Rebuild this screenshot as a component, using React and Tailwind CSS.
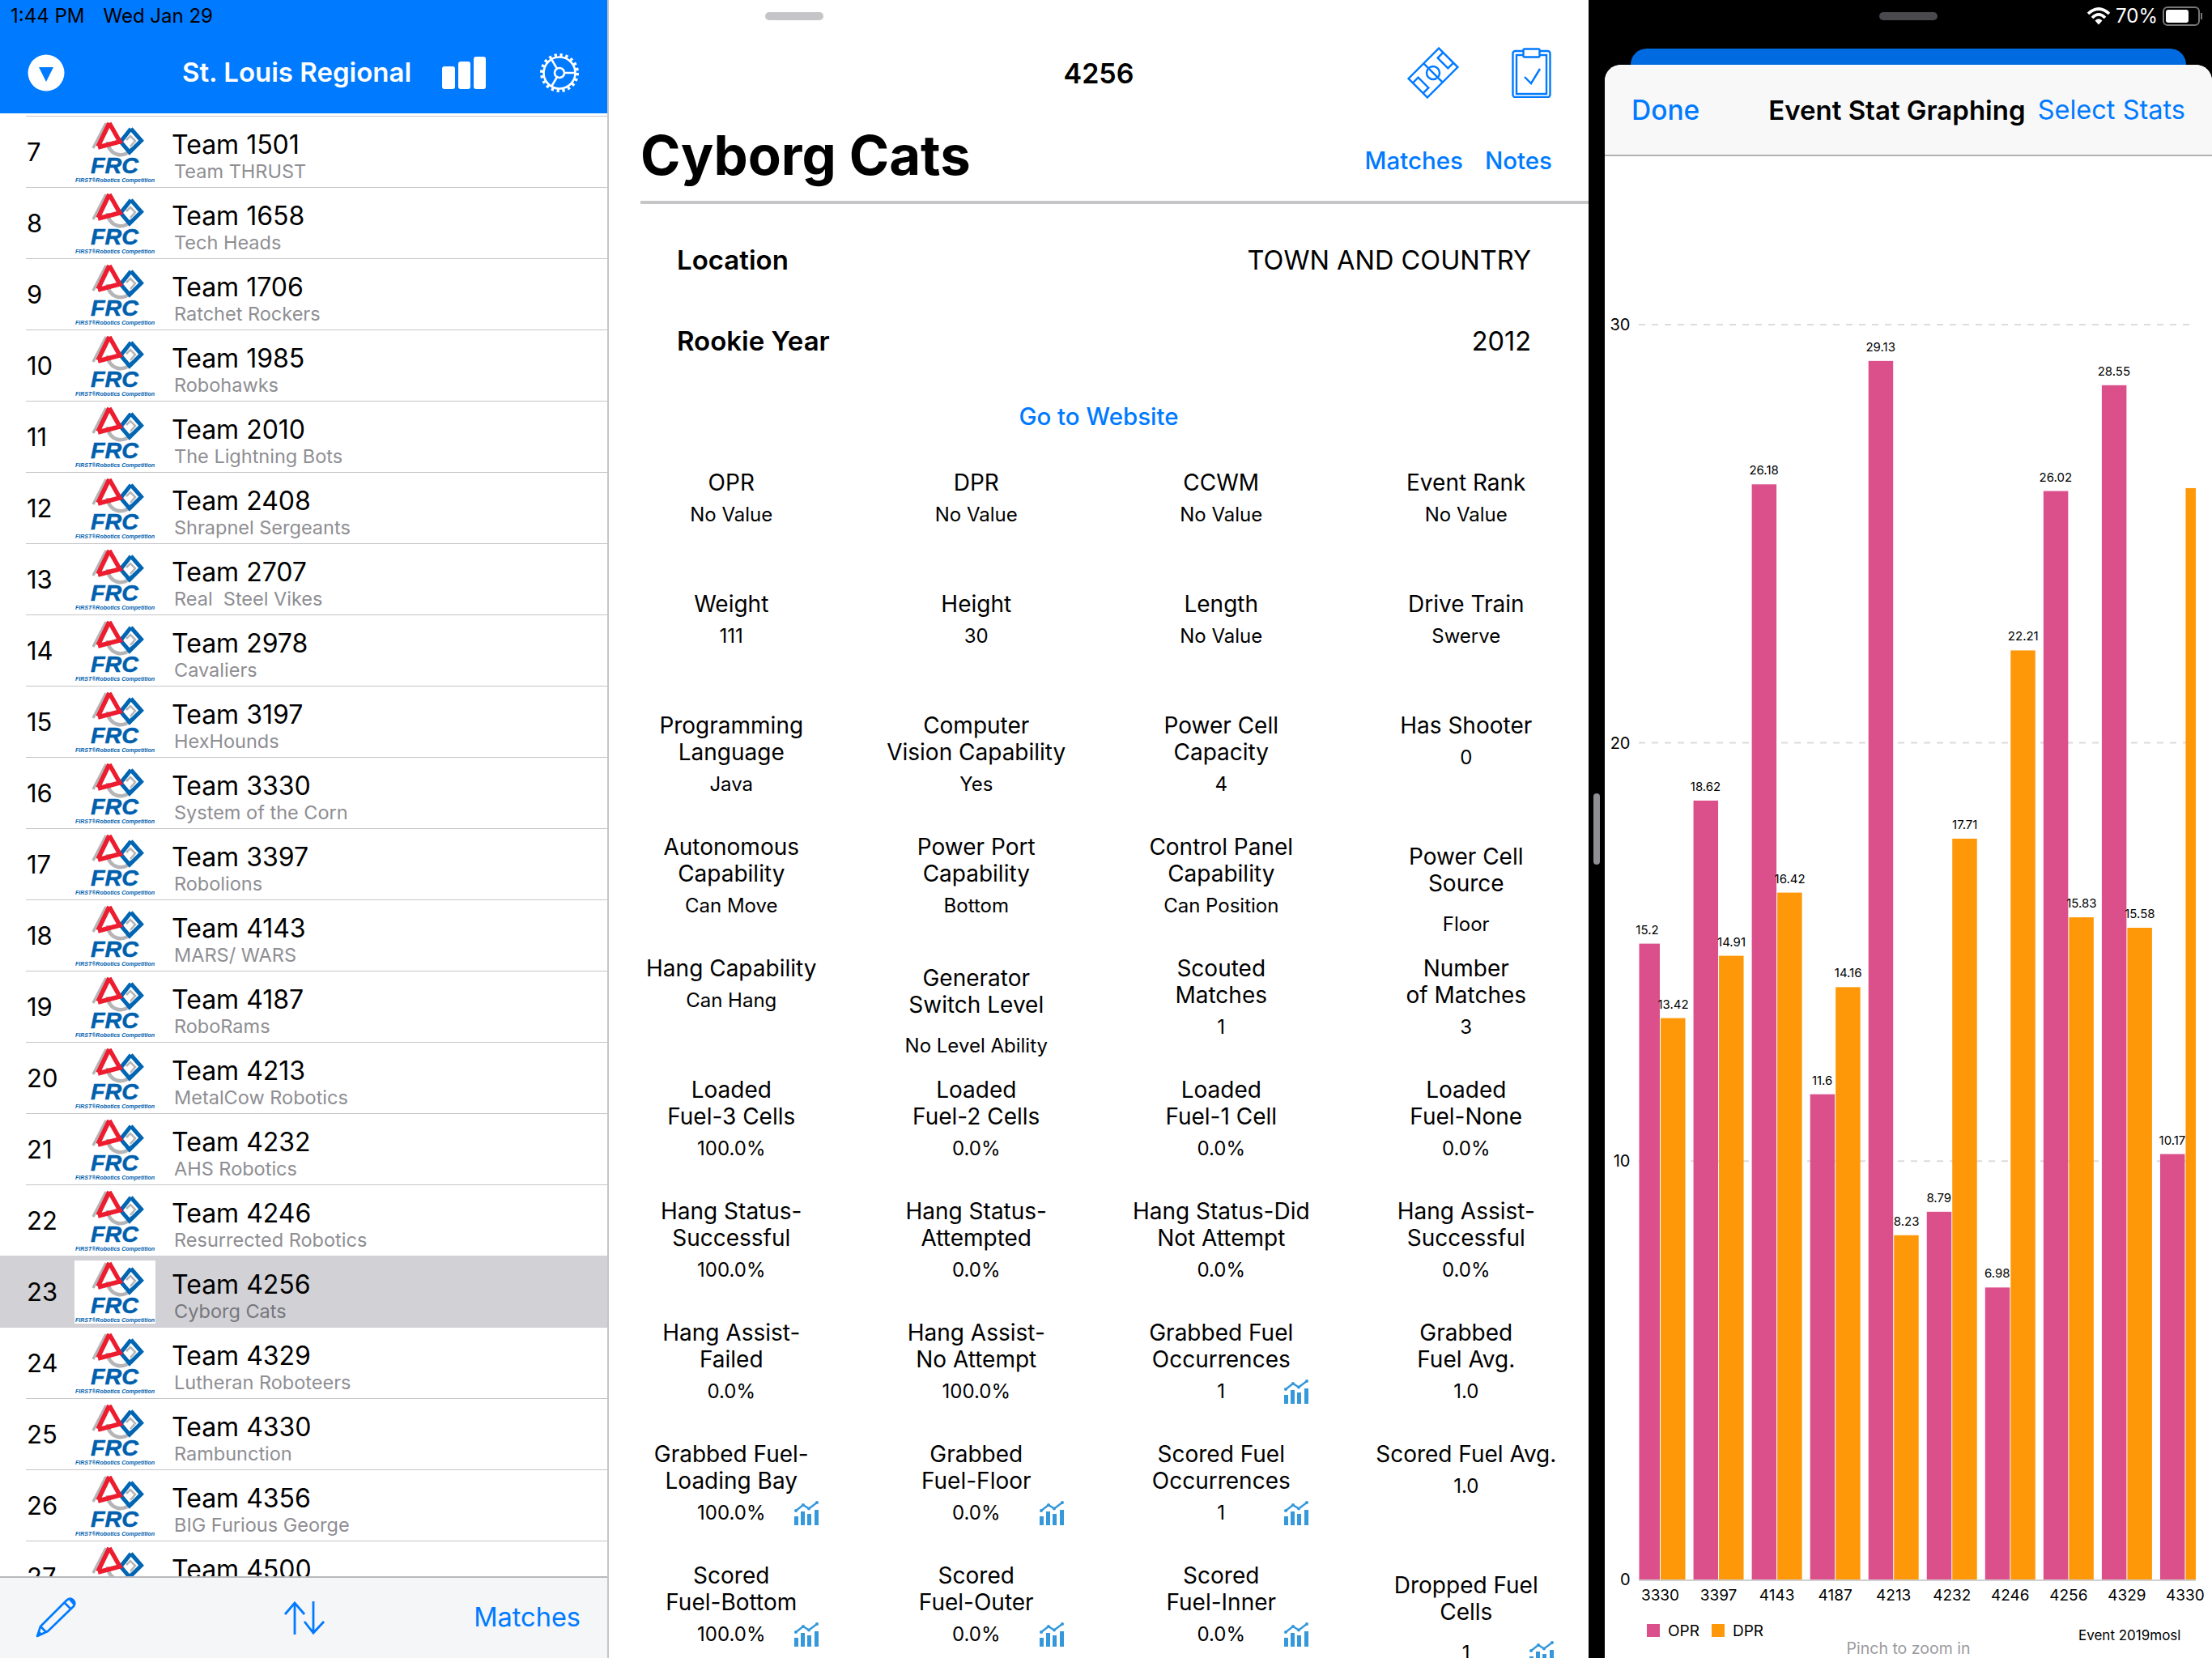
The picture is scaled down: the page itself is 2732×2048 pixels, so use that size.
const teams = [
  [7, 1501, 'Team THRUST'],
  [8, 1658, 'Tech Heads'],
  [9, 1706, 'Ratchet Rockers'],
  [10, 1985, 'Robohawks'],
  [11, 2010, 'The Lightning Bots'],
  [12, 2408, 'Shrapnel Sergeants'],
  [13, 2707, 'Real  Steel Vikes'],
  [14, 2978, 'Cavaliers'],
  [15, 3197, 'HexHounds'],
  [16, 3330, 'System of the Corn'],
  [17, 3397, 'Robolions'],
  [18, 4143, 'MARS/ WARS'],
  [19, 4187, 'RoboRams'],
  [20, 4213, 'MetalCow Robotics'],
  [21, 4232, 'AHS Robotics'],
  [22, 4246, 'Resurrected Robotics'],
  [23, 4256, 'Cyborg Cats'],
  [24, 4329, 'Lutheran Roboteers'],
  [25, 4330, 'Rambunction'],
  [26, 4356, 'BIG Furious George'],
  [27, 4500, ''],
]

// shift: title sits lower and value further away, as in the app's stack views
const stats = [
  { t: 'OPR', v: 'No Value' },
  { t: 'DPR', v: 'No Value' },
  { t: 'CCWM', v: 'No Value' },
  { t: 'Event Rank', v: 'No Value' },
  { t: 'Weight', v: '111' },
  { t: 'Height', v: '30' },
  { t: 'Length', v: 'No Value' },
  { t: 'Drive Train', v: 'Swerve' },
  { t: 'Programming\nLanguage', v: 'Java' },
  { t: 'Computer\nVision Capability', v: 'Yes' },
  { t: 'Power Cell\nCapacity', v: '4' },
  { t: 'Has Shooter', v: '0' },
  { t: 'Autonomous\nCapability', v: 'Can Move' },
  { t: 'Power Port\nCapability', v: 'Bottom' },
  { t: 'Control Panel\nCapability', v: 'Can Position' },
  { t: 'Power Cell\nSource', v: 'Floor', shift: true },
  { t: 'Hang Capability', v: 'Can Hang' },
  { t: 'Generator\nSwitch Level', v: 'No Level Ability', shift: true },
  { t: 'Scouted\nMatches', v: '1' },
  { t: 'Number\nof Matches', v: '3' },
  { t: 'Loaded\nFuel-3 Cells', v: '100.0%' },
  { t: 'Loaded\nFuel-2 Cells', v: '0.0%' },
  { t: 'Loaded\nFuel-1 Cell', v: '0.0%' },
  { t: 'Loaded\nFuel-None', v: '0.0%' },
  { t: 'Hang Status-\nSuccessful', v: '100.0%' },
  { t: 'Hang Status-\nAttempted', v: '0.0%' },
  { t: 'Hang Status-Did\nNot Attempt', v: '0.0%' },
  { t: 'Hang Assist-\nSuccessful', v: '0.0%' },
  { t: 'Hang Assist-\nFailed', v: '0.0%' },
  { t: 'Hang Assist-\nNo Attempt', v: '100.0%' },
  { t: 'Grabbed Fuel\nOccurrences', v: '1', graph: true },
  { t: 'Grabbed\nFuel Avg.', v: '1.0' },
  { t: 'Grabbed Fuel-\nLoading Bay', v: '100.0%', graph: true },
  { t: 'Grabbed\nFuel-Floor', v: '0.0%', graph: true },
  { t: 'Scored Fuel\nOccurrences', v: '1', graph: true },
  { t: 'Scored Fuel Avg.', v: '1.0' },
  { t: 'Scored\nFuel-Bottom', v: '100.0%', graph: true },
  { t: 'Scored\nFuel-Outer', v: '0.0%', graph: true },
  { t: 'Scored\nFuel-Inner', v: '0.0%', graph: true },
  { t: 'Dropped Fuel\nCells', v: '1', graph: true, shift: true },
]

const bars = [
  ['3330', 15.2, 13.42],
  ['3397', 18.62, 14.91],
  ['4143', 26.18, 16.42],
  ['4187', 11.6, 14.16],
  ['4213', 29.13, 8.23],
  ['4232', 8.79, 17.71],
  ['4246', 6.98, 22.21],
  ['4256', 26.02, 15.83],
  ['4329', 28.55, 15.58],
  ['4330', 10.17, 26.09],
]

function FrcLogo() {
  return (
    <svg viewBox="0 0 100 78" className="w-[100px] h-[78px] bg-white shrink-0">
      <path d="M39 3 L23 34" stroke="#b5b5b8" strokeWidth="3.5" fill="none" />
      <path d="M41 26 A16 16 0 0 0 71 34" stroke="#b5b5b8" strokeWidth="4.5" fill="none" />
      <path d="M69.7 10 L82.5 24.7 L68 39 L57 26 L69.7 10" stroke="#0066b3" strokeWidth="5" fill="none" />
      <path d="M64 24 L69 19 L75 25 L69 32" stroke="#b5b5b8" strokeWidth="2.5" fill="none" />
      <path d="M43 3 L29 32 M43 3 L56 26 L29 33" stroke="#ed1c2e" strokeWidth="5.5" fill="none" />
      <text x="20" y="65" fontFamily="Liberation Sans" fontWeight="700" fontStyle="italic" fontSize="28" textLength="59" lengthAdjust="spacingAndGlyphs" stroke="#0060ae" strokeWidth="0.5" fill="#0060ae">FRC</text>
      <text x="1" y="76" fontFamily="Liberation Sans" fontWeight="700" fontStyle="italic" fontSize="7" textLength="98" lengthAdjust="spacingAndGlyphs" fill="#0060ae">FIRST®Robotics Competition</text>
    </svg>
  )
}

function TeamRow({ rank, num, name }) {
  const selected = num === 4256
  return (
    <div className={`flex h-[87px] shrink-0 ${selected ? 'bg-[#d1d1d6]' : ''}`}>
      <div className="w-[92px] pl-[33px] pt-[24px] text-[31px] leading-[40px] text-black">{rank}</div>
      <div className="pt-[5px]"><FrcLogo /></div>
      <div className="ml-[20px] flex-1">
        <div className="mt-[15px] text-[32px] leading-[40px] text-black">Team {num}</div>
        <div className={`ml-[3px] -mt-[2px] text-[23.5px] leading-[30px] whitespace-pre ${selected ? 'text-[#77777c]' : 'text-[#8e8e93]'}`}>{name}</div>
      </div>
    </div>
  )
}

function Sidebar() {
  return (
    <div className="w-[752px] h-full flex flex-col border-r-2 border-[#c6c6c8] bg-white shrink-0">
      <div className="h-[140px] bg-[#007aff] shrink-0">
        <div className="h-[40px] pl-[13px] flex items-center text-[24px] text-black">
          <span>1:44 PM</span>
          <span className="ml-[23px]">Wed Jan 29</span>
        </div>
        <div className="h-[100px] flex items-center">
          <svg viewBox="0 0 46 46" className="w-[46px] h-[46px] ml-[34px]">
            <circle cx="23" cy="23" r="22.5" fill="#fff" />
            <path d="M14 16 H32 L23 34 Z" fill="#007aff" />
          </svg>
          <div className="ml-[145px] w-[321px] text-[33px] font-semibold text-white">St. Louis Regional</div>
          <svg viewBox="0 0 54 40" className="w-[54px] h-[40px] ml-0">
            <rect x="0" y="12" width="16" height="28" rx="3" fill="#fff" />
            <rect x="20" y="6" width="15" height="34" rx="3" fill="#fff" />
            <rect x="39" y="0" width="15" height="40" rx="3" fill="#fff" />
          </svg>
          <svg viewBox="0 0 50 50" className="w-[50px] h-[50px] ml-[66px]">
            <circle cx="25" cy="25" r="19.5" stroke="#fff" strokeWidth="2.6" fill="none" />
            <circle cx="25" cy="25" r="22" stroke="#fff" strokeWidth="4" strokeDasharray="3.3 3.6" fill="none" />
            <circle cx="25" cy="25" r="6" stroke="#fff" strokeWidth="2.6" fill="none" />
            <path d="M31 25 H44 M22 19.8 L15 8 M22 30.2 L15 42" stroke="#fff" strokeWidth="2.6" fill="none" />
          </svg>
        </div>
      </div>
      <div className="flex-1 min-h-0 overflow-hidden pt-[3px]">
        {teams.map(([rank, num, name], i) => (
          <div key={num}>
            <div className={i === 16 || i === 17 ? 'h-px bg-[#d1d1d6]' : 'h-px ml-[32px] bg-[#c6c6c8]'} />
            <TeamRow rank={rank} num={num} name={name} />
          </div>
        ))}
      </div>
      <div className="h-[101px] shrink-0 border-t-2 border-[#b9b9bb] bg-[#f5f6f7] flex items-center">
        <svg viewBox="0 0 50 50" className="w-[50px] h-[50px] ml-[44px] -mt-[2px]">
          <path d="M2 48 L6 36 L38 4 Q42 0 46 3 Q50 7 47 11 L15 42 Z M6 36 L13 43 M36 7 L43 14" stroke="#007aff" strokeWidth="2.6" strokeLinejoin="round" fill="none" />
          <path d="M2 48 L4 41 L9 46 Z M40 2 Q44 0 47 3 Q50 7 47 10 Z" fill="#007aff" />
        </svg>
        <svg viewBox="0 0 52 42" className="w-[52px] h-[42px] ml-[256px]">
          <path d="M14 41 V2 M2 16 L14 2 L26 16 M37 0 V39 M26 25 L37 39 L50 25" stroke="#007aff" strokeWidth="2.8" fill="none" />
        </svg>
        <div className="ml-auto mr-[33px] text-[32.5px] text-[#007aff]">Matches</div>
      </div>
    </div>
  )
}

function GraphIcon() {
  return (
    <svg viewBox="0 0 30 30" className="w-[30px] h-[30px]">
      <path d="M2 12 L11 5 L18 9.5 L28 2" stroke="#3498db" strokeWidth="2.4" fill="none" />
      <circle cx="2" cy="12" r="2" fill="#3498db" />
      <circle cx="11" cy="5" r="2" fill="#3498db" />
      <circle cx="18" cy="9.5" r="2" fill="#3498db" />
      <circle cx="28" cy="2" r="2" fill="#3498db" />
      <path d="M0 19 H5 V30 H0 Z M8 13 H13 V30 H8 Z M16 16 H21 V30 H16 Z M25 11 H30 V30 H25 Z" fill="#3498db" />
    </svg>
  )
}

function StatCell({ t, v, graph, shift }) {
  return (
    <div className={`h-[150px] text-center ${shift ? 'pt-[12px]' : ''}`}>
      <div className="text-[28px] leading-[33px] whitespace-pre-line text-black">{t}</div>
      <div className={`grid grid-cols-[1fr_156px_1fr] items-center ${shift ? 'mt-[19px]' : 'mt-[8px]'}`}>
        <div />
        <div className="justify-self-center text-[24px] leading-[30px] whitespace-nowrap text-black">{v}</div>
        <div>{graph && <GraphIcon />}</div>
      </div>
    </div>
  )
}

function TeamDetail() {
  return (
    <div className="w-[1210px] h-full shrink-0 bg-white overflow-hidden">
      <div className="pt-[15px] pl-[193px]">
        <div className="w-[72px] h-[10px] rounded-full bg-[#c5c5c7]" />
      </div>
      <div className="relative h-[130px] flex items-center justify-center">
        <div className="text-[34px] font-semibold text-black">4256</div>
        <div className="absolute right-[45px] top-[33px] flex items-center gap-[65px]">
          <svg viewBox="0 0 64 64" className="w-[64px] h-[64px]">
            <g transform="rotate(-45 32 32)" stroke="#007aff" strokeWidth="2.4" fill="none">
              <rect x="5.5" y="15.5" width="53" height="33" />
              <path d="M32 15.5 V48.5 M5.5 23 H15 V41 H5.5 M58.5 23 H49 V41 H58.5" />
              <circle cx="32" cy="32" r="8" />
            </g>
          </svg>
          <svg viewBox="0 0 50 62" className="w-[50px] h-[62px]">
            <rect x="1.5" y="4" width="46" height="57" rx="3" stroke="#007aff" strokeWidth="2.4" fill="none" />
            <rect x="6" y="9" width="37" height="48" stroke="#007aff" strokeWidth="2.4" fill="none" />
            <rect x="14.5" y="1.5" width="20" height="10" rx="1.5" stroke="#007aff" strokeWidth="2.4" fill="#fff" />
            <path d="M16 36 L24 44 L35 26" stroke="#007aff" strokeWidth="2.4" fill="none" />
          </svg>
        </div>
      </div>
      <div className="h-[93px] pl-[39px] pr-[45px] flex items-start justify-between">
        <div className="text-[67px] leading-[74px] font-bold text-black">Cyborg Cats</div>
        <div className="flex gap-[27px] text-[29.5px] font-medium text-[#007aff] mt-[21px]">
          <span>Matches</span>
          <span>Notes</span>
        </div>
      </div>
      <div className="ml-[39px] h-[4px] bg-[#c6c6c8]" />
      <div className="h-[20px]" />
      <div className="h-[100px] pl-[84px] pr-[71px] flex items-center justify-between text-black">
        <span className="font-semibold text-[33px]">Location</span>
        <span className="text-[32.5px]">TOWN AND COUNTRY</span>
      </div>
      <div className="h-[100px] pl-[84px] pr-[71px] flex items-center justify-between text-black">
        <span className="font-semibold text-[33px]">Rookie Year</span>
        <span className="text-[32.5px]">2012</span>
      </div>
      <div className="h-[85px] flex items-center justify-center text-[29.5px] font-medium text-[#007aff]">Go to Website</div>
      <div className="mt-[23px] grid grid-cols-4">
        {stats.map((s) => (
          <StatCell key={s.t} {...s} />
        ))}
      </div>
    </div>
  )
}

function BarChart() {
  const base = 1951
  const unit = 51.67
  return (
    <svg viewBox="1982 193 750 1855" className="w-[750px] h-[1855px]">
      <g fill="#000">
        {[0, 10, 20, 30].map((n) => (
          <text key={n} x="2013.5" y={base - n * unit + 7} fontSize="20" textAnchor="end">{n}</text>
        ))}
      </g>
      {[10, 20, 30].map((n) => (
        <line key={n} x1="2024" x2="2706" y1={base - n * unit} y2={base - n * unit} stroke="#dcdcdc" strokeWidth="2" strokeDasharray="8 8" />
      ))}
      <line x1="2024" x2="2712" y1={base + 1} y2={base + 1} stroke="#cfcfcf" strokeWidth="2" />
      {bars.map(([team, opr, dpr], i) => {
        const x = 2019.5 + i * 72.05
        const oprLeft = Math.max(x, 2024.5)
        const dprWidth = Math.min(30.5, 2712 - (x + 31.5))
        return (
          <g key={team}>
            <rect x={oprLeft} y={base - opr * unit} width={x + 30.5 - oprLeft} height={opr * unit} fill="#db508b" />
            <rect x={x + 31.5} y={base - dpr * unit} width={dprWidth} height={dpr * unit} fill="#ff9808" />
            <text x={x + 15} y={base - opr * unit - 12} fontSize="15" textAnchor="middle" fill="#000">{opr}</text>
            {i < 9 && <text x={x + 47} y={base - dpr * unit - 12} fontSize="15" textAnchor="middle" fill="#000">{dpr}</text>}
            <text x={x + 31} y="1977" fontSize="19" textAnchor="middle" fill="#000">{team}</text>
          </g>
        )
      })}
      <rect x="2034" y="2006" width="16" height="16" fill="#db508b" />
      <text x="2060" y="2021" fontSize="19" fill="#000">OPR</text>
      <rect x="2114" y="2006" width="16" height="16" fill="#ff9808" />
      <text x="2140" y="2021" fontSize="19" fill="#000">DPR</text>
      <text x="2567" y="2026" fontSize="17" fill="#000">Event 2019mosl</text>
      <text x="2357" y="2043" fontSize="19.5" textAnchor="middle" fill="#9a9a9e">Pinch to zoom in</text>
    </svg>
  )
}

function GraphSheet() {
  return (
    <div className="relative flex-1 h-full bg-black flex flex-col min-w-0">
      <div className="relative h-[60px] shrink-0">
        <div className="absolute left-[359px] top-[15px] w-[72px] h-[10px] rounded-full bg-[#4a4a4e]" />
        <div className="absolute right-[12px] top-[8px] flex items-center gap-[6px] text-white">
          <svg viewBox="0 0 30 24" className="w-[30px] h-[24px]">
            <path d="M2 9 Q15 -3 28 9 M7 14 Q15 6 23 14" stroke="#fff" strokeWidth="3.6" fill="none" />
            <path d="M10.5 17.5 Q15 13 19.5 17.5 L15 22.5 Z" fill="#fff" />
          </svg>
          <span className="text-[24px] leading-[24px]">70%</span>
          <div className="flex items-center">
            <div className="w-[46px] h-[24px] rounded-[6px] border-2 border-[#77777a] p-[2px]">
              <div className="w-[28px] h-full rounded-[3px] bg-white" />
            </div>
            <div className="w-[2px] h-[8px] bg-[#77777a] ml-[1px]" />
          </div>
        </div>
      </div>
      <div className="relative flex-1 min-h-0">
        <div className="ml-[52px] mr-[32px] h-[20px] rounded-t-[20px] bg-[#006be0]" />
        <div className="ml-[20px] h-[1968px] rounded-t-[20px] overflow-hidden bg-white">
          <div className="h-[113px] border-b-2 border-[#b2b2b2] bg-[#f8f8f8] pt-[2px] pl-[33px] pr-[33px] flex items-center">
            <span className="font-medium text-[33.5px] text-[#007aff]">Done</span>
            <span className="ml-[85px] font-semibold text-black text-[33px]">Event Stat Graphing</span>
            <span className="ml-auto text-[32.5px] text-[#007aff]">Select Stats</span>
          </div>
          <BarChart />
        </div>
      </div>
      <div className="absolute left-[6px] top-[980px] w-[8px] h-[88px] rounded-full bg-[#8e8e93]" />
    </div>
  )
}

export default function App() {
  return (
    <div className="w-[2732px] h-[2048px] flex overflow-hidden bg-white font-['Inter',sans-serif]">
      <Sidebar />
      <TeamDetail />
      <GraphSheet />
    </div>
  )
}
